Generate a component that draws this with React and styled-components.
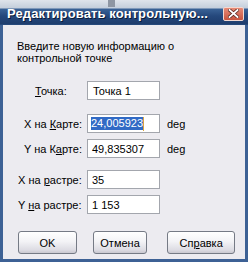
import styled, { createGlobalStyle } from 'styled-components';

const Global = createGlobalStyle`
    html, body {
        margin:0;
        padding:0;
        background:#fff;
    }
    body {
        font-family: Tahoma, "Liberation Sans", "DejaVu Sans", sans-serif;
        font-size:11px;
        color:#000;
    }
`;

const Window = styled.div`
    position:relative;
    width:248px;
    height:262px;
    box-sizing:border-box;
    display:flex;
    flex-direction:column;
    background:#3d6195;
    padding:0 3px 3px 3px;
`;

const Cursor = styled.div`
    position:absolute;
    left:108px;
    top:0;
    width:7px;
    height:7px;
    background:#8e96a3;
`;

const TitleBar = styled.div`
    height:25px;
    margin:0 -3px;
    padding:0 4px 0 7px;
    display:flex;
    align-items:center;
    justify-content:space-between;
    background:linear-gradient(to bottom, #dfe4eb 0px, #c4cedb 8px, #3a6296 9px, #25487c 16px, #1e3d6d 24px, #2d5589 25px);

    & h1 {
        margin:2px 0 0 0;
        font-family:Tahoma, "Liberation Sans", "DejaVu Sans", sans-serif;
        font-size:13px;
        font-weight:bold;
        color:#fff;
        text-shadow:1px 1px 0 #0b1c3a;
        white-space:nowrap;
        letter-spacing:0.1px;
    }
`;

const CloseBtn = styled.div`
    width:21px;
    height:14px;
    margin-top:2px;
    box-sizing:border-box;
    border:1px solid #f3d8d0;
    border-radius:2px;
    background:linear-gradient(to bottom, #e78a76, #c9553f);
    display:flex;
    align-items:center;
    justify-content:center;
`;

const Body = styled.div`
    flex:1;
    background:#ecebf0;
    padding:15px 10px 0 14px;
    display:flex;
    flex-direction:column;
`;

const Intro = styled.p`
    margin:0;
    line-height:12px;
    width:170px;
`;

const Group = styled.div`
    display:flex;
    flex-direction:column;
    gap:6px;
    margin-top:${(p) => p.$gap}px;
`;

const Row = styled.div`
    display:flex;
    align-items:center;
`;

const Label = styled.label`
    width:70px;
    box-sizing:border-box;
    padding-left:${(p) => p.$indent}px;
    white-space:nowrap;

    & u {
        text-decoration:underline;
    }
`;

const Field = styled.div`
    width:73px;
    height:19px;
    box-sizing:border-box;
    border:1px solid #a3a6ad;
    background:#fff;
    display:flex;
    align-items:center;
    padding-left:${(p) => p.$pad || 4}px;
    white-space:nowrap;
`;

const Selected = styled.span`
    background:#316ac5;
    color:#fff;
    line-height:13px;
`;

const Caret = styled.span`
    width:1px;
    height:14px;
    background:#d9a441;
`;

const Unit = styled.span`
    margin-left:7px;
`;

const Buttons = styled.div`
    display:flex;
    margin-top:17px;
    padding-left:1px;
`;

const Button = styled.button`
    width:${(p) => p.$w}px;
    height:23px;
    margin-right:${(p) => p.$mr || 0}px;
    padding:0;
    border:1px solid #757a85;
    border-radius:3px;
    background:linear-gradient(to bottom, #ffffff 0%, #f3f3f6 45%, #dddce3 85%, #c9c8d0 100%);
    font-family:Tahoma, "Liberation Sans", "DejaVu Sans", sans-serif;
    font-size:11px;
    color:#000;
`;

const App = () => {
    return (
        <Window>
            <Global/>
            <Cursor/>
            <TitleBar>
                <h1>Редактировать контрольную...</h1>
                <CloseBtn>
                    <svg width="11" height="9" viewBox="0 0 11 9">
                        <path d="M1.5 1 L9.5 8 M9.5 1 L1.5 8" stroke="#5a2a22" strokeWidth="3.4" strokeLinecap="square"/>
                        <path d="M1.5 1 L9.5 8 M9.5 1 L1.5 8" stroke="#fff" strokeWidth="1.8" strokeLinecap="square"/>
                    </svg>
                </CloseBtn>
            </TitleBar>
            <Body>
                <Intro>Введите новую информацию о контрольной точке</Intro>
                <Group $gap={17}>
                    <Row>
                        <Label $indent={18}><u>Т</u>очка:</Label>
                        <Field $pad={5}>Точка 1</Field>
                    </Row>
                </Group>
                <Group $gap={14}>
                    <Row>
                        <Label $indent={7}>X на <u>К</u>арте:</Label>
                        <Field $pad={3}><Selected>24,005923</Selected><Caret/></Field>
                        <Unit>deg</Unit>
                    </Row>
                    <Row>
                        <Label $indent={7}>Y на К<u>а</u>рте:</Label>
                        <Field>49,835307</Field>
                        <Unit>deg</Unit>
                    </Row>
                </Group>
                <Group $gap={12}>
                    <Row>
                        <Label $indent={1}>X на <u>р</u>астре:</Label>
                        <Field>35</Field>
                    </Row>
                    <Row>
                        <Label $indent={1}>Y <u>н</u>а растре:</Label>
                        <Field>1 153</Field>
                    </Row>
                </Group>
                <Buttons>
                    <Button $w={59} $mr={16}>OK</Button>
                    <Button $w={55} $mr={20}>Отмена</Button>
                    <Button $w={68}>Сп<u>р</u>авка</Button>
                </Buttons>
            </Body>
        </Window>
    );
}

export default App;
